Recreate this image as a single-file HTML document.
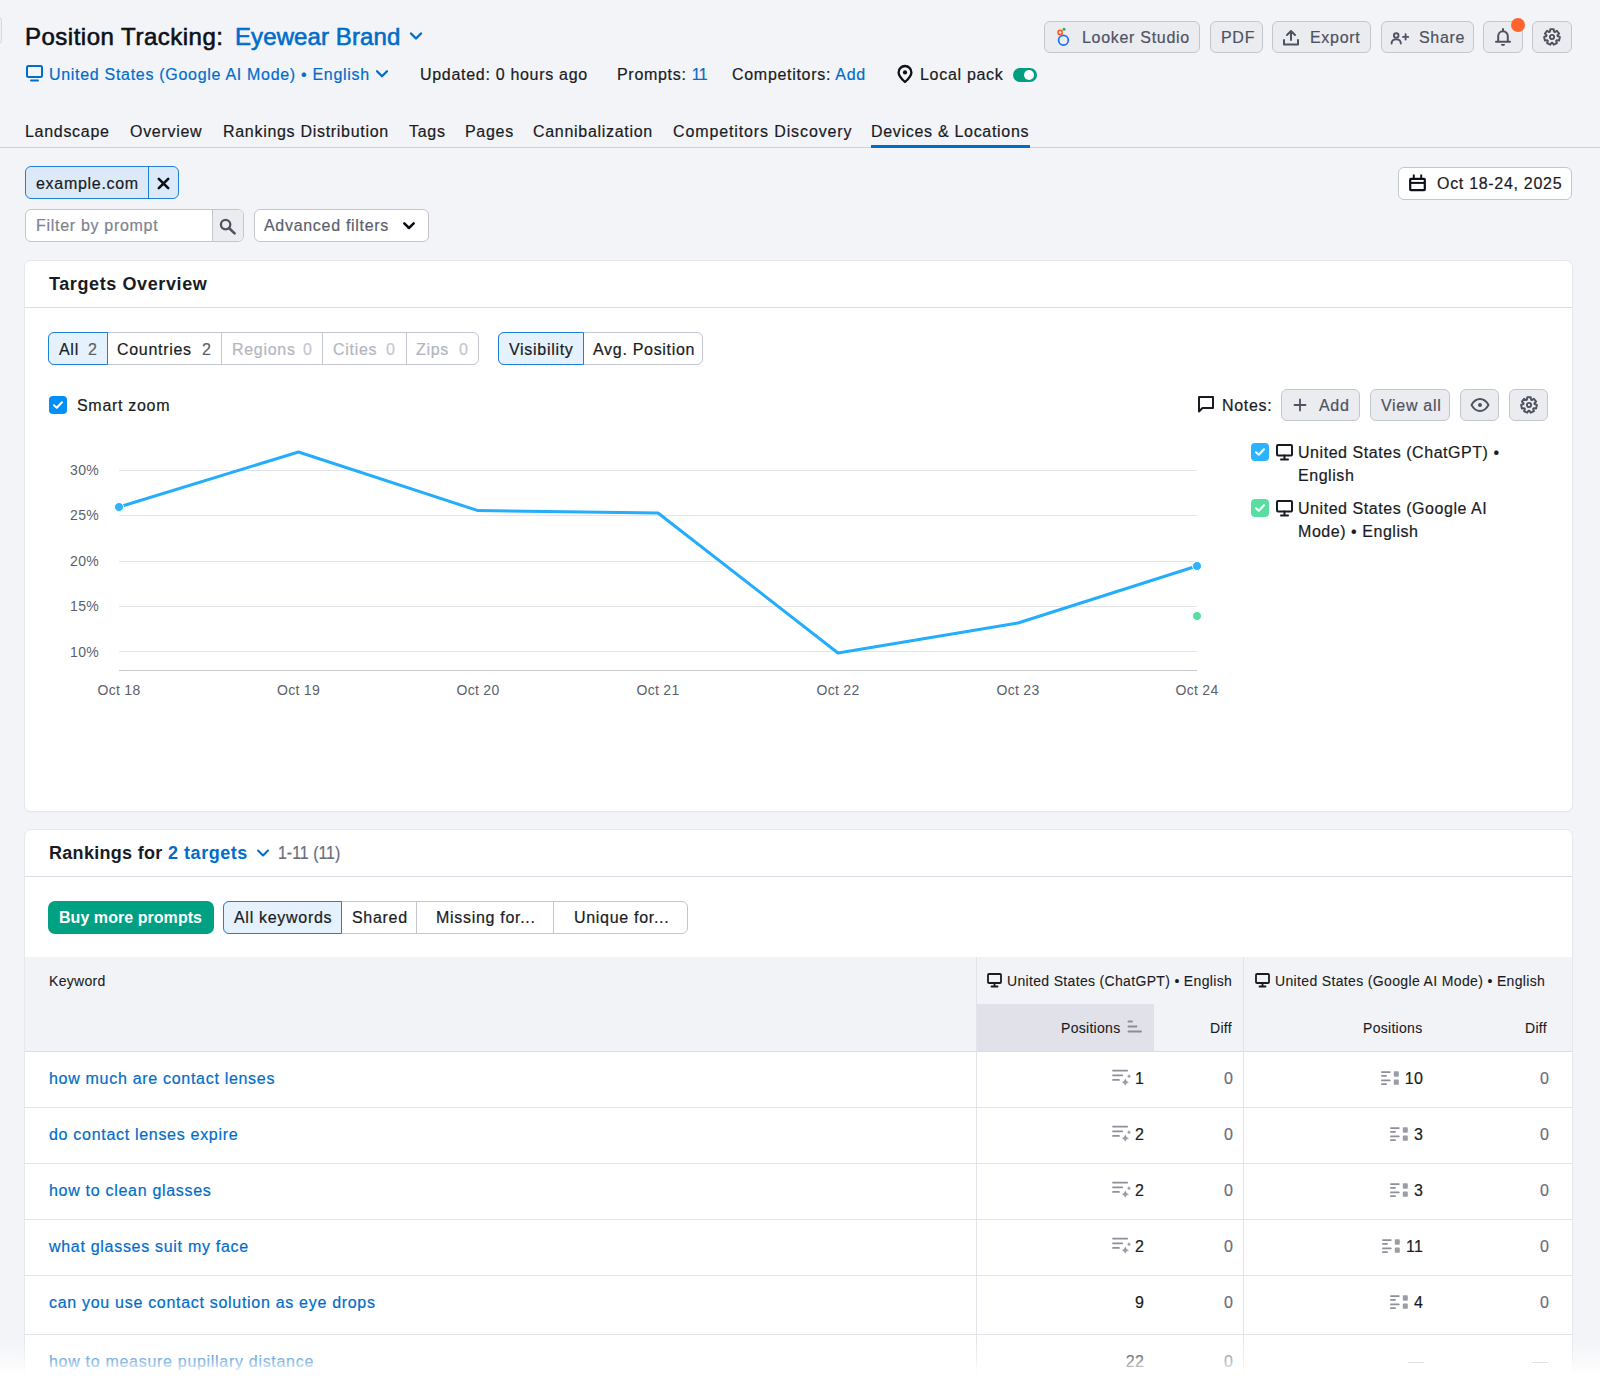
<!DOCTYPE html>
<html><head><meta charset="utf-8">
<style>
*{box-sizing:border-box;margin:0;padding:0}
html,body{width:1600px;height:1383px;overflow:hidden;background:#f3f4f8;font-family:"Liberation Sans",sans-serif;color:#191b23;font-size:16px;letter-spacing:0.7px;-webkit-text-stroke-width:0.2px}
.a{position:absolute;white-space:nowrap}
.t{line-height:20px}
.blue{color:#006dca}
.btn{position:absolute;height:32px;border:1px solid #c4c6cf;border-radius:6px;background:#ebecf0;color:#4f5260}
.btn span{position:absolute;top:6px;line-height:20px}
svg{position:absolute;overflow:visible}
</style></head><body>
<!-- left edge fragment -->
<div class="a" style="left:-6px;top:17px;width:8px;height:27px;border:1px solid #d7d9e0;border-radius:3px;background:#eeeff3"></div>

<!-- Title -->
<div class="a" style="left:25px;top:23px;font-size:24px;line-height:28px;letter-spacing:0.5px;-webkit-text-stroke:0.6px #0e1018;color:#0e1018">Position Tracking:</div>
<div class="a blue" style="left:235px;top:23px;font-size:24px;line-height:28px;letter-spacing:0.1px;-webkit-text-stroke:0.6px #006dca">Eyewear Brand</div>
<svg style="left:409px;top:31px" width="14" height="10" viewBox="0 0 14 10"><path d="M2 2.5 L7 7.5 L12 2.5" fill="none" stroke="#006dca" stroke-width="2.4" stroke-linecap="round" stroke-linejoin="round"/></svg>

<!-- Row 2 -->
<svg style="left:26px;top:65px" width="17" height="17" viewBox="0 0 17 17"><rect x="1" y="1" width="15" height="11" rx="1.5" fill="none" stroke="#006dca" stroke-width="2"/><path d="M5 15.5 H12" stroke="#006dca" stroke-width="2" stroke-linecap="round"/></svg>
<div class="a t blue" style="left:49px;top:65px">United States (Google AI Mode) • English</div>
<svg style="left:375px;top:69px" width="14" height="10" viewBox="0 0 14 10"><path d="M2 2.3 L7 7.3 L12 2.3" fill="none" stroke="#006dca" stroke-width="2.3" stroke-linecap="round" stroke-linejoin="round"/></svg>
<div class="a t" style="left:420px;top:65px">Updated: 0 hours ago</div>
<div class="a t" style="left:617px;top:65px">Prompts: <span class="blue" style="letter-spacing:-0.8px">11</span></div>
<div class="a t" style="left:732px;top:65px">Competitors: <span class="blue">Add</span></div>
<svg style="left:896px;top:65px" width="18" height="18" viewBox="0 0 18 18"><path d="M9 17 C9 17 2.6 11.2 2.6 7.4 A6.4 6.4 0 0 1 15.4 7.4 C15.4 11.2 9 17 9 17 Z" fill="none" stroke="#0e1018" stroke-width="2.3" stroke-linejoin="round"/><circle cx="9" cy="7.4" r="2.1" fill="#0e1018"/></svg>
<div class="a t" style="left:920px;top:65px">Local pack</div>
<div class="a" style="left:1013px;top:68px;width:24px;height:14px;border-radius:7px;background:#009f81"></div>
<div class="a" style="left:1024px;top:70px;width:10px;height:10px;border-radius:5px;background:#fff"></div>

<!-- Top right buttons -->
<div class="btn" style="left:1044px;top:21px;width:156px">
  <svg style="left:12px;top:6px" width="14" height="20" viewBox="0 0 14 20"><circle cx="6.45" cy="12.3" r="4.85" fill="none" stroke="#1a6dff" stroke-width="1.7"/><circle cx="3.1" cy="4.4" r="2.1" fill="none" stroke="#ff5412" stroke-width="1.5"/><circle cx="7" cy="1.2" r="1.5" fill="#34a853"/></svg>
  <span style="left:37px">Looker Studio</span></div>
<div class="btn" style="left:1210px;top:21px;width:53px"><span style="left:10px">PDF</span></div>
<div class="btn" style="left:1272px;top:21px;width:99px">
  <svg style="left:9px;top:6.5px" width="18" height="18" viewBox="0 0 18 18"><path d="M9 11 V2.5 M5 6 L9 2 L13 6" fill="none" stroke="#4f5260" stroke-width="2" stroke-linecap="round" stroke-linejoin="round"/><path d="M2 11 V15.5 H16 V11" fill="none" stroke="#4f5260" stroke-width="2" stroke-linecap="round" stroke-linejoin="round"/></svg>
  <span style="left:37px">Export</span></div>
<div class="btn" style="left:1381px;top:21px;width:93px">
  <svg style="left:8px;top:7px" width="20" height="18" viewBox="0 0 20 18"><circle cx="6.2" cy="6.5" r="2.3" fill="none" stroke="#4f5260" stroke-width="1.9"/><path d="M1.6 14.6 C1.6 11.8 3.6 10.4 6.2 10.4 C8.8 10.4 10.8 11.8 10.8 14.6" fill="none" stroke="#4f5260" stroke-width="1.9" stroke-linecap="round"/><path d="M15.6 5.3 V10.5 M13 7.9 H18.2" stroke="#4f5260" stroke-width="1.9" stroke-linecap="round"/></svg>
  <span style="left:37px">Share</span></div>
<div class="btn" style="left:1483px;top:21px;width:40px">
  <svg style="left:11px;top:6px" width="18" height="20" viewBox="0 0 18 20"><path d="M8 0.9 V2.6" stroke="#4f5260" stroke-width="2" stroke-linecap="round"/><path d="M3.2 13.7 V8.1 A4.8 4.8 0 0 1 12.8 8.1 V13.7" fill="none" stroke="#4f5260" stroke-width="2"/><path d="M1 13.7 H15" stroke="#4f5260" stroke-width="2" stroke-linecap="round"/><path d="M5.9 16 A2.1 2.1 0 0 0 10.1 16 Z" fill="#4f5260"/></svg>
</div>
<div class="a" style="left:1511px;top:18px;width:14px;height:14px;border-radius:7px;background:#ff642d"></div>
<div class="btn" style="left:1532px;top:21px;width:40px">
  <svg style="left:9px;top:5px" width="20" height="20" viewBox="0 0 20 20"><path id="gearp" d="M7.98 4.67 L8.22 2.30 L11.78 2.30 L12.02 4.67 L12.91 5.10 L14.91 3.81 L17.13 6.59 L15.43 8.25 L15.65 9.22 L17.90 9.98 L17.11 13.45 L14.75 13.15 L14.13 13.93 L14.94 16.16 L11.74 17.71 L10.50 15.68 L9.50 15.68 L8.26 17.71 L5.06 16.16 L5.87 13.93 L5.25 13.15 L2.89 13.45 L2.10 9.98 L4.35 9.22 L4.57 8.25 L2.87 6.59 L5.09 3.81 L7.09 5.10 Z" fill="none" stroke="#4f5260" stroke-width="1.9" stroke-linejoin="round"/><circle cx="10" cy="10" r="2.1" fill="none" stroke="#4f5260" stroke-width="1.9"/></svg>
</div>

<!-- Tabs -->
<div class="a" style="left:0;top:147px;width:1600px;height:1px;background:#cfd1d9"></div>
<div class="a t" style="left:25px;top:122px">Landscape</div>
<div class="a t" style="left:130px;top:122px">Overview</div>
<div class="a t" style="left:223px;top:122px">Rankings Distribution</div>
<div class="a t" style="left:409px;top:122px">Tags</div>
<div class="a t" style="left:465px;top:122px">Pages</div>
<div class="a t" style="left:533px;top:122px">Cannibalization</div>
<div class="a t" style="left:673px;top:122px;letter-spacing:0.88px">Competitors Discovery</div>
<div class="a t" style="left:871px;top:122px">Devices &amp; Locations</div>
<div class="a" style="left:871px;top:145px;width:159px;height:3px;background:#006dca"></div>

<!-- Filters -->
<div class="a" style="left:25px;top:166px;width:154px;height:33px;border:1px solid #1f7fd6;border-radius:6px;background:#dbe9f8"></div>
<div class="a" style="left:148px;top:166px;width:1px;height:33px;background:#1f7fd6"></div>
<div class="a t" style="left:36px;top:174px">example.com</div>
<svg style="left:157px;top:177px" width="13" height="13" viewBox="0 0 13 13"><path d="M1.8 1.8 L11.2 11.2 M11.2 1.8 L1.8 11.2" stroke="#0e1018" stroke-width="2.6" stroke-linecap="round"/></svg>

<div class="a" style="left:25px;top:209px;width:219px;height:33px;border:1px solid #c4c6cf;border-radius:6px;background:#fff;overflow:hidden">
  <div style="position:absolute;left:186px;top:0;width:33px;height:33px;background:#ebecf0;border-left:1px solid #c4c6cf"></div>
</div>
<div class="a t" style="left:36px;top:216px;color:#80838f">Filter by prompt</div>
<svg style="left:219px;top:218px" width="18" height="17" viewBox="0 0 18 17"><circle cx="6.6" cy="6.6" r="4.7" fill="none" stroke="#4f5260" stroke-width="2.3"/><path d="M10.2 10.2 L15.6 15.4" stroke="#4f5260" stroke-width="2.6" stroke-linecap="round"/></svg>

<div class="a" style="left:254px;top:209px;width:175px;height:33px;border:1px solid #c4c6cf;border-radius:6px;background:#fff"></div>
<div class="a t" style="left:264px;top:216px;color:#5c5f6b">Advanced filters</div>
<svg style="left:402px;top:221px" width="14" height="10" viewBox="0 0 14 10"><path d="M2.3 2.3 L7 7 L11.7 2.3" fill="none" stroke="#0e1018" stroke-width="2.5" stroke-linecap="round" stroke-linejoin="round"/></svg>

<div class="a" style="left:1398px;top:167px;width:174px;height:33px;border:1px solid #c4c6cf;border-radius:6px;background:#fff"></div>
<svg style="left:1409px;top:174px" width="17" height="18" viewBox="0 0 17 18"><rect x="1.2" y="4.9" width="14.6" height="11.3" rx="0.6" fill="none" stroke="#0e1018" stroke-width="2.2"/><path d="M1.2 8.9 H15.8" stroke="#0e1018" stroke-width="2"/><path d="M4.8 0.6 V4.5 M12.2 0.6 V4.5" stroke="#0e1018" stroke-width="1.9"/></svg>
<div class="a t" style="left:1437px;top:174px">Oct 18-24, 2025</div>

<!-- Card 1 -->
<div class="a" style="left:25px;top:261px;width:1547px;height:550px;background:#fff;border-radius:6px;box-shadow:0 0 0 1px #e7e8ee,0 1px 2px rgba(25,27,35,0.08)"></div>
<div class="a" style="left:25px;top:307px;width:1547px;height:1px;background:#dcdde4"></div>
<div class="a" style="left:49px;top:273px;font-size:18px;line-height:22px;font-weight:bold;letter-spacing:0.6px;-webkit-text-stroke-width:0">Targets Overview</div>

<!-- segmented 1 -->
<div class="a" style="left:48px;top:332px;width:431px;height:33px;border:1px solid #c4c6cf;border-radius:6px;background:#fff"></div>
<div class="a" style="left:48px;top:332px;width:60px;height:33px;border:1px solid #1f7fd6;border-radius:6px 0 0 6px;background:#e5f2fd"></div>
<div class="a" style="left:221px;top:333px;width:1px;height:31px;background:#c4c6cf"></div>
<div class="a" style="left:322px;top:333px;width:1px;height:31px;background:#c4c6cf"></div>
<div class="a" style="left:406px;top:333px;width:1px;height:31px;background:#c4c6cf"></div>
<div class="a t" style="left:59px;top:340px">All</div><div class="a t" style="left:88px;top:340px;color:#5c5f6b">2</div>
<div class="a t" style="left:117px;top:340px">Countries</div><div class="a t" style="left:202px;top:340px;color:#5c5f6b">2</div>
<div class="a t" style="left:232px;top:340px;color:#b3b6bf">Regions</div><div class="a t" style="left:303px;top:340px;color:#c4c6cf">0</div>
<div class="a t" style="left:333px;top:340px;color:#b3b6bf">Cities</div><div class="a t" style="left:386px;top:340px;color:#c4c6cf">0</div>
<div class="a t" style="left:416px;top:340px;color:#b3b6bf">Zips</div><div class="a t" style="left:459px;top:340px;color:#c4c6cf">0</div>

<div class="a" style="left:498px;top:332px;width:205px;height:33px;border:1px solid #c4c6cf;border-radius:6px;background:#fff"></div>
<div class="a" style="left:498px;top:332px;width:86px;height:33px;border:1px solid #1f7fd6;border-radius:6px 0 0 6px;background:#e5f2fd"></div>
<div class="a t" style="left:509px;top:340px">Visibility</div>
<div class="a t" style="left:593px;top:340px">Avg. Position</div>

<!-- smart zoom -->
<div class="a" style="left:49px;top:396px;width:18px;height:18px;border-radius:4px;background:#008ff8"></div>
<svg style="left:49px;top:396px" width="18" height="18" viewBox="0 0 18 18"><path d="M5 9.2 L7.8 11.8 L13 6.3" fill="none" stroke="#fff" stroke-width="2" stroke-linecap="round" stroke-linejoin="round"/></svg>
<div class="a t" style="left:77px;top:396px">Smart zoom</div>

<!-- notes -->
<svg style="left:1197px;top:395px" width="18" height="18" viewBox="0 0 18 18"><path d="M2 16.5 V2 H16 V13 H5.5 Z" fill="none" stroke="#191b23" stroke-width="2" stroke-linejoin="round"/></svg>
<div class="a t" style="left:1222px;top:396px">Notes:</div>
<div class="btn" style="left:1281px;top:389px;width:79px"><svg style="left:11px;top:8px" width="14" height="14" viewBox="0 0 14 14"><path d="M7 1.5 V12.5 M1.5 7 H12.5" stroke="#4f5260" stroke-width="1.8" stroke-linecap="round"/></svg><span style="left:37px">Add</span></div>
<div class="btn" style="left:1370px;top:389px;width:80px"><span style="left:10px">View all</span></div>
<div class="btn" style="left:1460px;top:389px;width:39px"><svg style="left:9px;top:7px" width="20" height="16" viewBox="0 0 20 16"><path d="M1.5 8 C4 3.5 7 2 10 2 C13 2 16 3.5 18.5 8 C16 12.5 13 14 10 14 C7 14 4 12.5 1.5 8 Z" fill="none" stroke="#4f5260" stroke-width="1.9" stroke-linejoin="round"/><circle cx="10" cy="8" r="2" fill="#4f5260"/></svg></div>
<div class="btn" style="left:1509px;top:389px;width:39px"><svg style="left:9px;top:5px" width="20" height="20" viewBox="0 0 20 20"><use href="#gearp"/><circle cx="10" cy="10" r="2.1" fill="none" stroke="#4f5260" stroke-width="1.9"/></svg></div>

<!-- legend -->
<div class="a" style="left:1251px;top:443px;width:18px;height:18px;border-radius:4px;background:#2bb3ff"></div>
<svg style="left:1251px;top:443px" width="18" height="18" viewBox="0 0 18 18"><path d="M5 9.2 L7.8 11.8 L13 6.3" fill="none" stroke="#fff" stroke-width="2" stroke-linecap="round" stroke-linejoin="round"/></svg>
<div class="a" style="left:1251px;top:499px;width:18px;height:18px;border-radius:4px;background:#59dda0"></div>
<svg style="left:1251px;top:499px" width="18" height="18" viewBox="0 0 18 18"><path d="M5 9.2 L7.8 11.8 L13 6.3" fill="none" stroke="#fff" stroke-width="2" stroke-linecap="round" stroke-linejoin="round"/></svg>
<svg style="left:1276px;top:444px" width="17" height="17" viewBox="0 0 17 17"><rect x="1" y="1" width="15" height="10.5" rx="1" fill="none" stroke="#191b23" stroke-width="2"/><path d="M8.5 11.5 V14.5 M5 15.5 H12" stroke="#191b23" stroke-width="2" stroke-linecap="round"/></svg>
<svg style="left:1276px;top:500px" width="17" height="17" viewBox="0 0 17 17"><rect x="1" y="1" width="15" height="10.5" rx="1" fill="none" stroke="#191b23" stroke-width="2"/><path d="M8.5 11.5 V14.5 M5 15.5 H12" stroke="#191b23" stroke-width="2" stroke-linecap="round"/></svg>
<div class="a" style="left:1298px;top:441px;line-height:23px;letter-spacing:0.55px">United States (ChatGPT) •<br>English</div>
<div class="a" style="left:1298px;top:497px;line-height:23px;letter-spacing:0.55px">United States (Google AI<br>Mode) • English</div>

<!-- chart -->
<svg style="left:0;top:0" width="1600" height="820" viewBox="0 0 1600 820">
  <g stroke="#e3e4ea" stroke-width="1">
    <path d="M119 470.5 H1197 M119 515.5 H1197 M119 561.5 H1197 M119 606.5 H1197 M119 651.5 H1197"/>
  </g>
  <path d="M119 670.5 H1197" stroke="#c9cbd3" stroke-width="1.2"/>
  <polyline points="119,507 298.5,452 478,510.6 658,513 838,653 1018,623 1197,566" fill="none" stroke="#24adfc" stroke-width="3" stroke-linejoin="round"/>
  <circle cx="119" cy="507" r="4.5" fill="#2bb3ff" stroke="#fff" stroke-width="1"/>
  <circle cx="1197" cy="566" r="4.5" fill="#2bb3ff" stroke="#fff" stroke-width="1"/>
  <circle cx="1197" cy="616" r="4.5" fill="#59dda0" stroke="#fff" stroke-width="1"/>
  <g font-family="Liberation Sans" font-size="14" fill="#5c5f6b" letter-spacing="0.3" text-anchor="end">
    <text x="99" y="475">30%</text><text x="99" y="520">25%</text><text x="99" y="566">20%</text><text x="99" y="611">15%</text><text x="99" y="657">10%</text>
  </g>
  <g font-family="Liberation Sans" font-size="14" fill="#5c5f6b" letter-spacing="0.3" text-anchor="middle">
    <text x="119" y="695">Oct 18</text><text x="298.5" y="695">Oct 19</text><text x="478" y="695">Oct 20</text><text x="658" y="695">Oct 21</text><text x="838" y="695">Oct 22</text><text x="1018" y="695">Oct 23</text><text x="1197" y="695">Oct 24</text>
  </g>
</svg>

<!-- Card 2 -->
<div class="a" style="left:25px;top:830px;width:1547px;height:700px;background:#fff;border-radius:6px;box-shadow:0 0 0 1px #e7e8ee,0 1px 2px rgba(25,27,35,0.08)"></div>
<div class="a" style="left:25px;top:876px;width:1547px;height:1px;background:#dcdde4"></div>
<div class="a" style="left:49px;top:842px;font-size:18px;line-height:22px;font-weight:bold;letter-spacing:0.3px;-webkit-text-stroke-width:0">Rankings for <span style="color:#006dca;letter-spacing:0.55px">2 targets</span></div>
<svg style="left:256px;top:848px" width="14" height="10" viewBox="0 0 14 10"><path d="M2 2.5 L7 7.5 L12 2.5" fill="none" stroke="#006dca" stroke-width="2" stroke-linecap="round" stroke-linejoin="round"/></svg>
<div class="a" style="left:278px;top:842px;font-size:18px;line-height:22px;color:#6b6e7a;letter-spacing:0px;transform:scaleX(0.885);transform-origin:0 0">1-11 (11)</div>

<div class="a" style="left:48px;top:901px;width:166px;height:33px;border-radius:7px;background:#00a082"></div>
<div class="a t" style="left:59px;top:908px;color:#fff;font-weight:bold;letter-spacing:0.05px;-webkit-text-stroke-width:0">Buy more prompts</div>
<div class="a" style="left:223px;top:901px;width:465px;height:33px;border:1px solid #c4c6cf;border-radius:6px;background:#fff"></div>
<div class="a" style="left:223px;top:901px;width:119px;height:33px;border:1px solid #1f7fd6;border-radius:6px 0 0 6px;background:#e5f2fd"></div>
<div class="a" style="left:416px;top:902px;width:1px;height:31px;background:#c4c6cf"></div>
<div class="a" style="left:553px;top:902px;width:1px;height:31px;background:#c4c6cf"></div>
<div class="a t" style="left:234px;top:908px">All keywords</div>
<div class="a t" style="left:352px;top:908px">Shared</div>
<div class="a t" style="left:436px;top:908px">Missing for...</div>
<div class="a t" style="left:574px;top:908px">Unique for...</div>

<!-- table header -->
<div class="a" style="left:25px;top:957px;width:1547px;height:94px;background:#f2f3f7"></div>
<div class="a" style="left:976px;top:1004px;width:178px;height:47px;background:#e1e2e9"></div>
<div class="a" style="left:25px;top:1051px;width:1547px;height:1px;background:#dcdde4"></div>
<div class="a" style="left:976px;top:957px;width:1px;height:430px;background:#e3e4ea"></div>
<div class="a" style="left:1243px;top:957px;width:1px;height:430px;background:#e3e4ea"></div>
<div class="a" style="left:49px;top:971px;font-size:14px;line-height:20px;-webkit-text-stroke-width:0.1px;letter-spacing:0.3px">Keyword</div>
<svg style="left:987px;top:973px" width="15" height="15" viewBox="0 0 15 15"><rect x="1" y="1" width="13" height="9" rx="1" fill="none" stroke="#191b23" stroke-width="1.8"/><path d="M7.5 10 V12.5 M4.5 13.5 H10.5" stroke="#191b23" stroke-width="1.8" stroke-linecap="round"/></svg>
<div class="a" style="left:1007px;top:971px;font-size:14px;line-height:20px;-webkit-text-stroke-width:0.1px;letter-spacing:0.33px">United States (ChatGPT) • English</div>
<svg style="left:1255px;top:973px" width="15" height="15" viewBox="0 0 15 15"><rect x="1" y="1" width="13" height="9" rx="1" fill="none" stroke="#191b23" stroke-width="1.8"/><path d="M7.5 10 V12.5 M4.5 13.5 H10.5" stroke="#191b23" stroke-width="1.8" stroke-linecap="round"/></svg>
<div class="a" style="left:1275px;top:971px;font-size:14px;line-height:20px;-webkit-text-stroke-width:0.1px;letter-spacing:0.35px">United States (Google AI Mode) • English</div>
<div class="a" style="left:1061px;top:1018px;font-size:14px;line-height:20px;-webkit-text-stroke-width:0.1px;letter-spacing:0.3px">Positions</div>
<svg style="left:1127px;top:1020px" width="15" height="13" viewBox="0 0 15 13"><path d="M1.5 1.5 H5 M1.5 6.5 H9.5 M1.5 11.5 H14" stroke="#8a8d99" stroke-width="1.9" stroke-linecap="round"/></svg>
<div class="a" style="left:1210px;top:1018px;font-size:14px;line-height:20px;-webkit-text-stroke-width:0.1px;letter-spacing:0.3px">Diff</div>
<div class="a" style="left:1363px;top:1018px;font-size:14px;line-height:20px;-webkit-text-stroke-width:0.1px;letter-spacing:0.3px">Positions</div>
<div class="a" style="left:1525px;top:1018px;font-size:14px;line-height:20px;-webkit-text-stroke-width:0.1px;letter-spacing:0.3px">Diff</div>

<div class="a t blue" style="left:49px;top:1069px">how much are contact lenses</div>
<div class="a t" style="right:456px;top:1069px;letter-spacing:0.2px;display:flex;align-items:flex-start"><svg style="position:static;display:block;margin-right:3px;margin-top:0px" width="20" height="16" viewBox="0 0 20 16"><path d="M1 1.5 H15.2 M1 6.3 H10.2 M1 10.9 H7" stroke="#8d909b" stroke-width="1.75" stroke-linecap="round"/><path d="M13.3 9.6 Q14.1 12.5 16.9 13.2 Q14.1 13.9 13.3 16.8 Q12.5 13.9 9.7 13.2 Q12.5 12.5 13.3 9.6 Z" fill="#9b9ea9"/><path d="M17 5 Q17.5 6.7 19.1 7.2 Q17.5 7.7 17 9.4 Q16.5 7.7 14.9 7.2 Q16.5 6.7 17 5 Z" fill="#9b9ea9"/></svg><span>1</span></div>
<div class="a t" style="right:367px;top:1069px;color:#6b6e7a;letter-spacing:0.2px">0</div>
<div class="a t" style="right:177px;top:1069px;letter-spacing:0.2px;display:flex;align-items:flex-start"><svg style="position:static;display:block;margin-right:6px;margin-top:1px" width="18" height="15" viewBox="0 0 18 15"><path d="M0.9 2 H8.8 M0.9 5.8 H5.1 M0.9 10.45 H8.8 M0.9 14 H5.1" stroke="#8d909b" stroke-width="1.75" stroke-linecap="round"/><rect x="12.8" y="1.2" width="5" height="5.5" rx="0.9" fill="#9b9ea9"/><rect x="12.8" y="9.5" width="5" height="5.3" rx="0.9" fill="#9b9ea9"/></svg><span>10</span></div>
<div class="a t" style="right:51px;top:1069px;color:#6b6e7a;letter-spacing:0.2px">0</div>
<div class="a" style="left:25px;top:1107px;width:1547px;height:1px;background:#e3e4ea"></div>
<div class="a t blue" style="left:49px;top:1125px">do contact lenses expire</div>
<div class="a t" style="right:456px;top:1125px;letter-spacing:0.2px;display:flex;align-items:flex-start"><svg style="position:static;display:block;margin-right:3px;margin-top:0px" width="20" height="16" viewBox="0 0 20 16"><path d="M1 1.5 H15.2 M1 6.3 H10.2 M1 10.9 H7" stroke="#8d909b" stroke-width="1.75" stroke-linecap="round"/><path d="M13.3 9.6 Q14.1 12.5 16.9 13.2 Q14.1 13.9 13.3 16.8 Q12.5 13.9 9.7 13.2 Q12.5 12.5 13.3 9.6 Z" fill="#9b9ea9"/><path d="M17 5 Q17.5 6.7 19.1 7.2 Q17.5 7.7 17 9.4 Q16.5 7.7 14.9 7.2 Q16.5 6.7 17 5 Z" fill="#9b9ea9"/></svg><span>2</span></div>
<div class="a t" style="right:367px;top:1125px;color:#6b6e7a;letter-spacing:0.2px">0</div>
<div class="a t" style="right:177px;top:1125px;letter-spacing:0.2px;display:flex;align-items:flex-start"><svg style="position:static;display:block;margin-right:6px;margin-top:1px" width="18" height="15" viewBox="0 0 18 15"><path d="M0.9 2 H8.8 M0.9 5.8 H5.1 M0.9 10.45 H8.8 M0.9 14 H5.1" stroke="#8d909b" stroke-width="1.75" stroke-linecap="round"/><rect x="12.8" y="1.2" width="5" height="5.5" rx="0.9" fill="#9b9ea9"/><rect x="12.8" y="9.5" width="5" height="5.3" rx="0.9" fill="#9b9ea9"/></svg><span>3</span></div>
<div class="a t" style="right:51px;top:1125px;color:#6b6e7a;letter-spacing:0.2px">0</div>
<div class="a" style="left:25px;top:1163px;width:1547px;height:1px;background:#e3e4ea"></div>
<div class="a t blue" style="left:49px;top:1181px">how to clean glasses</div>
<div class="a t" style="right:456px;top:1181px;letter-spacing:0.2px;display:flex;align-items:flex-start"><svg style="position:static;display:block;margin-right:3px;margin-top:0px" width="20" height="16" viewBox="0 0 20 16"><path d="M1 1.5 H15.2 M1 6.3 H10.2 M1 10.9 H7" stroke="#8d909b" stroke-width="1.75" stroke-linecap="round"/><path d="M13.3 9.6 Q14.1 12.5 16.9 13.2 Q14.1 13.9 13.3 16.8 Q12.5 13.9 9.7 13.2 Q12.5 12.5 13.3 9.6 Z" fill="#9b9ea9"/><path d="M17 5 Q17.5 6.7 19.1 7.2 Q17.5 7.7 17 9.4 Q16.5 7.7 14.9 7.2 Q16.5 6.7 17 5 Z" fill="#9b9ea9"/></svg><span>2</span></div>
<div class="a t" style="right:367px;top:1181px;color:#6b6e7a;letter-spacing:0.2px">0</div>
<div class="a t" style="right:177px;top:1181px;letter-spacing:0.2px;display:flex;align-items:flex-start"><svg style="position:static;display:block;margin-right:6px;margin-top:1px" width="18" height="15" viewBox="0 0 18 15"><path d="M0.9 2 H8.8 M0.9 5.8 H5.1 M0.9 10.45 H8.8 M0.9 14 H5.1" stroke="#8d909b" stroke-width="1.75" stroke-linecap="round"/><rect x="12.8" y="1.2" width="5" height="5.5" rx="0.9" fill="#9b9ea9"/><rect x="12.8" y="9.5" width="5" height="5.3" rx="0.9" fill="#9b9ea9"/></svg><span>3</span></div>
<div class="a t" style="right:51px;top:1181px;color:#6b6e7a;letter-spacing:0.2px">0</div>
<div class="a" style="left:25px;top:1219px;width:1547px;height:1px;background:#e3e4ea"></div>
<div class="a t blue" style="left:49px;top:1237px">what glasses suit my face</div>
<div class="a t" style="right:456px;top:1237px;letter-spacing:0.2px;display:flex;align-items:flex-start"><svg style="position:static;display:block;margin-right:3px;margin-top:0px" width="20" height="16" viewBox="0 0 20 16"><path d="M1 1.5 H15.2 M1 6.3 H10.2 M1 10.9 H7" stroke="#8d909b" stroke-width="1.75" stroke-linecap="round"/><path d="M13.3 9.6 Q14.1 12.5 16.9 13.2 Q14.1 13.9 13.3 16.8 Q12.5 13.9 9.7 13.2 Q12.5 12.5 13.3 9.6 Z" fill="#9b9ea9"/><path d="M17 5 Q17.5 6.7 19.1 7.2 Q17.5 7.7 17 9.4 Q16.5 7.7 14.9 7.2 Q16.5 6.7 17 5 Z" fill="#9b9ea9"/></svg><span>2</span></div>
<div class="a t" style="right:367px;top:1237px;color:#6b6e7a;letter-spacing:0.2px">0</div>
<div class="a t" style="right:177px;top:1237px;letter-spacing:0.2px;display:flex;align-items:flex-start"><svg style="position:static;display:block;margin-right:6px;margin-top:1px" width="18" height="15" viewBox="0 0 18 15"><path d="M0.9 2 H8.8 M0.9 5.8 H5.1 M0.9 10.45 H8.8 M0.9 14 H5.1" stroke="#8d909b" stroke-width="1.75" stroke-linecap="round"/><rect x="12.8" y="1.2" width="5" height="5.5" rx="0.9" fill="#9b9ea9"/><rect x="12.8" y="9.5" width="5" height="5.3" rx="0.9" fill="#9b9ea9"/></svg><span>11</span></div>
<div class="a t" style="right:51px;top:1237px;color:#6b6e7a;letter-spacing:0.2px">0</div>
<div class="a" style="left:25px;top:1275px;width:1547px;height:1px;background:#e3e4ea"></div>
<div class="a t blue" style="left:49px;top:1293px">can you use contact solution as eye drops</div>
<div class="a t" style="right:456px;top:1293px;letter-spacing:0.2px;display:flex;align-items:flex-start"><span>9</span></div>
<div class="a t" style="right:367px;top:1293px;color:#6b6e7a;letter-spacing:0.2px">0</div>
<div class="a t" style="right:177px;top:1293px;letter-spacing:0.2px;display:flex;align-items:flex-start"><svg style="position:static;display:block;margin-right:6px;margin-top:1px" width="18" height="15" viewBox="0 0 18 15"><path d="M0.9 2 H8.8 M0.9 5.8 H5.1 M0.9 10.45 H8.8 M0.9 14 H5.1" stroke="#8d909b" stroke-width="1.75" stroke-linecap="round"/><rect x="12.8" y="1.2" width="5" height="5.5" rx="0.9" fill="#9b9ea9"/><rect x="12.8" y="9.5" width="5" height="5.3" rx="0.9" fill="#9b9ea9"/></svg><span>4</span></div>
<div class="a t" style="right:51px;top:1293px;color:#6b6e7a;letter-spacing:0.2px">0</div>
<div class="a" style="left:25px;top:1334px;width:1547px;height:1px;background:#e3e4ea"></div>
<div class="a t blue" style="left:49px;top:1352px">how to measure pupillary distance</div>
<div class="a t" style="right:456px;top:1352px;letter-spacing:0.2px;display:flex;align-items:flex-start"><span>22</span></div>
<div class="a t" style="right:367px;top:1352px;color:#6b6e7a;letter-spacing:0.2px">0</div>
<div class="a" style="left:1408px;top:1362px;width:16px;height:1px;background:#b8bac3"></div>
<div class="a" style="left:1532px;top:1362px;width:16px;height:1px;background:#b8bac3"></div>
<div class="a" style="left:0;top:1338px;width:1600px;height:45px;background:linear-gradient(to bottom,rgba(255,255,255,0) 0%,rgba(255,255,255,0.5) 50%,#fff 82%,#fff 100%)"></div>
<!-- END -->

</body></html>
